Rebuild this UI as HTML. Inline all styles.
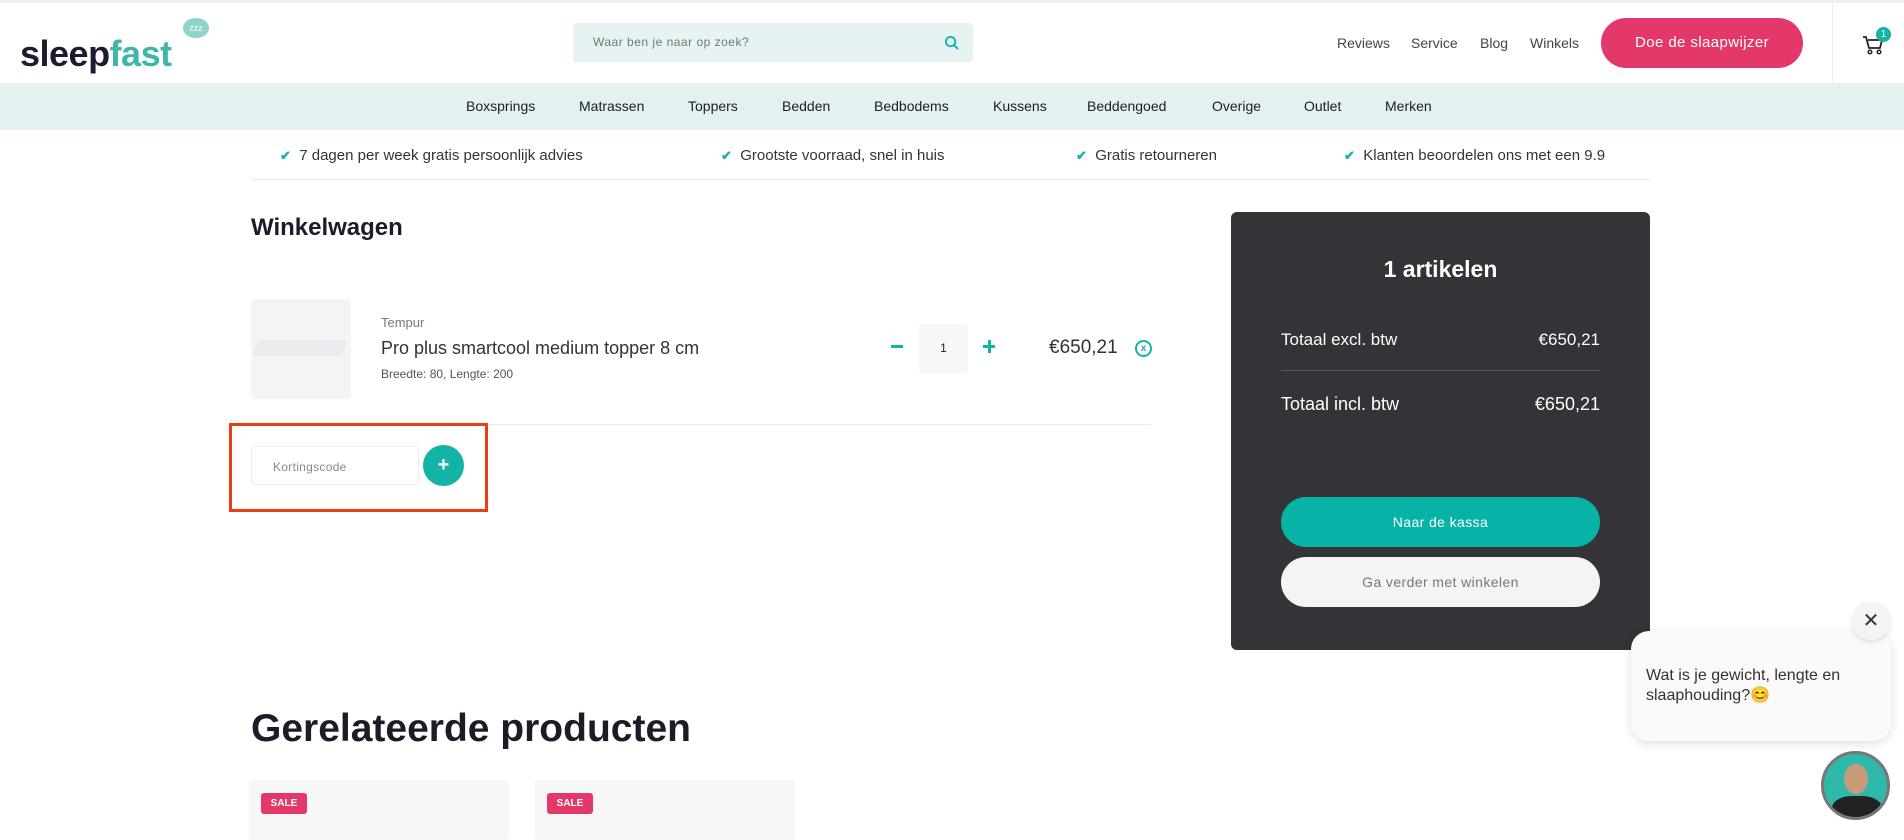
<!DOCTYPE html>
<html><head><meta charset="utf-8"><style>
*{margin:0;padding:0;box-sizing:border-box}
body{width:1904px;height:834px;overflow:hidden;background:#fff;font-family:"Liberation Sans",sans-serif;color:#222;position:relative}
.a{position:absolute;white-space:nowrap}
.nav{top:83px;left:0;width:1904px;height:47px;background:#e3f2f1}
.nav span{position:absolute;top:15px;font-size:14px;color:#1c1c28}
.tl{font-size:14px;color:#444}
.chk{color:#14b3a5;font-weight:bold;font-size:13px}
.usp{top:147px;font-size:15px;color:#333}
</style></head><body>
<div class="a" style="top:0;left:0;width:1904px;height:3px;background:#eee"></div>
<div class="a" style="left:20px;top:33px;font-size:36px;font-weight:bold;letter-spacing:-0.5px"><span style="color:#1c1c2e">sleep</span><span style="color:#3fb7a8">fast</span></div>
<div class="a" style="left:183px;top:18px;width:26px;height:20px;border-radius:50%;background:#8fd3c9;color:#fff;font-size:9px;text-align:center;line-height:20px">zzz</div>
<div class="a" style="left:573px;top:23px;width:400px;height:39px;background:#e6f3f2;border-radius:4px"></div>
<div class="a" style="left:593px;top:35px;font-size:12px;color:#777;letter-spacing:.5px">Waar ben je naar op zoek?</div>
<svg class="a" style="left:944px;top:35px" width="15" height="15" viewBox="0 0 16 16"><circle cx="7" cy="7" r="5" fill="none" stroke="#14b3a5" stroke-width="2"/><path d="M11 11l4 4" stroke="#14b3a5" stroke-width="2"/></svg>
<div class="a tl" style="left:1337px;top:35px">Reviews</div>
<div class="a tl" style="left:1411px;top:35px">Service</div>
<div class="a tl" style="left:1480px;top:35px">Blog</div>
<div class="a tl" style="left:1530px;top:35px">Winkels</div>
<div class="a" style="left:1601px;top:18px;width:202px;height:50px;border-radius:25px;background:#e5386a;color:#fff;font-size:15px;text-align:center;line-height:50px;letter-spacing:.4px">Doe de slaapwijzer</div>
<div class="a" style="left:1832px;top:3px;width:1px;height:80px;background:#eee"></div>
<svg class="a" style="left:1862px;top:34px" width="22" height="22" viewBox="0 0 22 22"><path d="M1 3h3l3 11h11l2-8H6" fill="none" stroke="#222" stroke-width="1.8"/><circle cx="8" cy="18" r="1.8" fill="none" stroke="#222" stroke-width="1.5"/><circle cx="17" cy="18" r="1.8" fill="none" stroke="#222" stroke-width="1.5"/></svg>
<div class="a" style="left:1876px;top:27px;width:15px;height:15px;border-radius:50%;background:#14b3a5;color:#fff;font-size:10px;text-align:center;line-height:15px">1</div>
<div class="a nav">
<span style="left:466px">Boxsprings</span><span style="left:579px">Matrassen</span><span style="left:688px">Toppers</span><span style="left:782px">Bedden</span><span style="left:874px">Bedbodems</span><span style="left:993px">Kussens</span><span style="left:1087px">Beddengoed</span><span style="left:1212px">Overige</span><span style="left:1304px">Outlet</span><span style="left:1385px">Merken</span></div>
<div class="a usp" style="left:280px"><span class="chk">✔</span>&nbsp;&nbsp;7 dagen per week gratis persoonlijk advies</div>
<div class="a usp" style="left:721px"><span class="chk">✔</span>&nbsp;&nbsp;Grootste voorraad, snel in huis</div>
<div class="a usp" style="left:1076px"><span class="chk">✔</span>&nbsp;&nbsp;Gratis retourneren</div>
<div class="a usp" style="left:1344px"><span class="chk">✔</span>&nbsp;&nbsp;Klanten beoordelen ons met een 9.9</div>
<div class="a" style="left:251px;top:179px;width:1399px;height:1px;background:#eaeaea"></div>
<div class="a" style="left:251px;top:214px;font-size:24px;font-weight:bold;color:#1c1c28">Winkelwagen</div>
<div class="a" style="left:251px;top:299px;width:100px;height:100px;background:#f4f4f4;border-radius:4px"></div>
<div class="a" style="left:255px;top:340px;width:90px;height:16px;background:#e8ecee;transform:skewX(-15deg);border-radius:3px"></div>
<div class="a" style="left:381px;top:315px;font-size:13px;color:#777">Tempur</div>
<div class="a" style="left:381px;top:338px;font-size:18px;color:#333">Pro plus smartcool medium topper 8 cm</div>
<div class="a" style="left:381px;top:367px;font-size:12px;color:#555">Breedte: 80, Lengte: 200</div>
<div class="a" style="left:891px;top:345px;width:12px;height:3px;background:#14b3a5"></div>
<div class="a" style="left:919px;top:324px;width:49px;height:49px;background:#f6f6f6;border-radius:3px;text-align:center;line-height:49px;font-size:12px">1</div>
<div class="a" style="left:983px;top:345px;width:12px;height:3px;background:#14b3a5"></div>
<div class="a" style="left:988px;top:340px;width:3px;height:13px;background:#14b3a5"></div>
<div class="a" style="left:1049px;top:337px;font-size:19px;color:#333">€650,21</div>
<div class="a" style="left:1135px;top:340px;width:17px;height:17px;border:2px solid #14b3a5;border-radius:50%;color:#14b3a5;font-size:10px;text-align:center;line-height:13px;font-weight:bold">x</div>
<div class="a" style="left:251px;top:424px;width:900px;height:1px;background:#eaeaea"></div>
<div class="a" style="left:229px;top:423px;width:259px;height:89px;border:3px solid #ea3d12"></div>
<div class="a" style="left:251px;top:446px;width:168px;height:39px;border:1px solid #eee;border-radius:3px;font-size:12px;color:#888;padding:13px 0 0 21px;letter-spacing:.3px">Kortingscode</div>
<div class="a" style="left:423px;top:445px;width:41px;height:41px;border-radius:50%;background:#14b3a5;color:#fff;font-size:20px;font-weight:bold;text-align:center;line-height:40px">+</div>
<div class="a" style="left:1231px;top:212px;width:419px;height:438px;background:#333338;border-radius:6px"></div>
<div class="a" style="left:1231px;top:256px;width:419px;text-align:center;font-size:23px;font-weight:bold;color:#fff">1 artikelen</div>
<div class="a" style="left:1281px;top:330px;font-size:17px;color:#fff">Totaal excl. btw</div>
<div class="a" style="left:1500px;width:100px;text-align:right;top:330px;font-size:17px;color:#fff">€650,21</div>
<div class="a" style="left:1281px;top:370px;width:319px;height:1px;background:#555"></div>
<div class="a" style="left:1281px;top:394px;font-size:18px;color:#fff">Totaal incl. btw</div>
<div class="a" style="left:1500px;width:100px;text-align:right;top:394px;font-size:18px;color:#fff">€650,21</div>
<div class="a" style="left:1281px;top:497px;width:319px;height:50px;border-radius:25px;background:#07b3a4;color:#fff;font-size:14px;text-align:center;line-height:50px;letter-spacing:.4px">Naar de kassa</div>
<div class="a" style="left:1281px;top:557px;width:319px;height:50px;border-radius:25px;background:#f4f4f4;color:#777;font-size:14px;text-align:center;line-height:50px;letter-spacing:.4px">Ga verder met winkelen</div>
<div class="a" style="left:251px;top:707px;font-size:39px;font-weight:bold;color:#1c1c28">Gerelateerde producten</div>
<div class="a" style="left:249px;top:780px;width:260px;height:60px;background:#f7f7f7;border-radius:4px"></div>
<div class="a" style="left:534px;top:780px;width:261px;height:60px;background:#f7f7f7;border-radius:4px"></div>
<div class="a" style="left:261px;top:793px;width:46px;height:21px;background:#e5386a;color:#fff;font-size:10px;font-weight:bold;text-align:center;line-height:21px;border-radius:3px">SALE</div>
<div class="a" style="left:547px;top:793px;width:46px;height:21px;background:#e5386a;color:#fff;font-size:10px;font-weight:bold;text-align:center;line-height:21px;border-radius:3px">SALE</div>
<div class="a" style="left:1631px;top:631px;width:260px;height:110px;background:#fafafa;border-radius:18px;box-shadow:0 3px 10px rgba(0,0,0,.12)"></div>
<div class="a" style="left:1646px;top:666px;font-size:16px;color:#333;line-height:20px;white-space:normal;width:230px">Wat is je gewicht, lengte en slaaphouding?😊</div>
<div class="a" style="left:1852px;top:602px;width:38px;height:38px;border-radius:50%;background:#f4f4f4;box-shadow:0 2px 6px rgba(0,0,0,.12);text-align:center;line-height:38px;font-size:20px;color:#333">✕</div>
<div class="a" style="left:1821px;top:751px;width:69px;height:69px;border-radius:50%;background:#2fb9aa;border:3px solid #777;overflow:hidden"><div style="position:absolute;left:20px;top:10px;width:24px;height:30px;border-radius:50%;background:#c99a7c"></div><div style="position:absolute;left:8px;top:42px;width:50px;height:30px;border-radius:40% 40% 0 0;background:#222"></div></div>
</body></html>
